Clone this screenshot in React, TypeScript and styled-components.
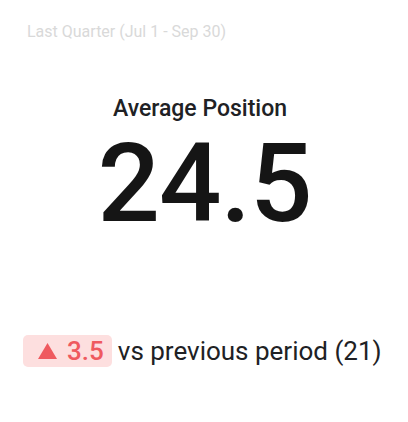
import React from 'react'
import styled, { createGlobalStyle } from 'styled-components'

const GlobalStyle = createGlobalStyle`
	html, body {
		margin: 0;
		padding: 0;
		background: #ffffff;
	}
	body {
		font-family: Roboto, 'Noto Sans', sans-serif;
		color: #1b1b1b;
	}
`

const Card = styled.div`
	width: 408px;
	height: 422px;
	box-sizing: border-box;
	padding: 20px 22px 0 27px;
	display: flex;
	flex-direction: column;
`

const Period = styled.div`
	font-size: 16px;
	line-height: 24px;
	color: #d9d9d9;
`

const Metric = styled.div`
	margin-top: 51px;
	display: flex;
	flex-direction: column;
	align-items: center;
`

const Label = styled.div`
	font-size: 23px;
	font-weight: 500;
	line-height: 28px;
	color: #202124;
	margin-right: 13px;
`

const Value = styled.div`
	font-size: 110px;
	font-weight: 500;
	line-height: 110px;
	margin-top: 6px;
	letter-spacing: -1px;
	color: #151515;
	margin-left: -4px;
`

const Comparison = styled.div`
	margin-top: 96px;
	margin-left: -4px;
	display: flex;
	align-items: center;
	gap: 6px;
	font-size: 26px;
	line-height: 32px;
	color: #202124;
	white-space: nowrap;
`

const Delta = styled.span<{ $up: boolean }>`
	display: inline-flex;
	align-items: center;
	gap: 10px;
	height: 32px;
	padding: 0 8px 0 15px;
	border-radius: 5px;
	background: ${p => (p.$up ? '#fddfdf' : '#dcf3e2')};
	color: ${p => (p.$up ? '#ef5a5f' : '#2e9e55')};
	font-weight: 500;
`

const Arrow = styled.svg`
	width: 19px;
	height: 16px;
	fill: currentColor;
`

export default function App() {
	return (
		<>
			<GlobalStyle />
			<Card>
				<Period>Last Quarter (Jul 1 - Sep 30)</Period>
				<Metric>
					<Label>Average Position</Label>
					<Value>24.5</Value>
				</Metric>
				<Comparison>
					<Delta $up>
						<Arrow viewBox="0 0 19 16">
							<polygon points="9.5,0 19,16 0,16" />
						</Arrow>
						3.5
					</Delta>
					<span>vs previous period (21)</span>
				</Comparison>
			</Card>
		</>
	)
}
